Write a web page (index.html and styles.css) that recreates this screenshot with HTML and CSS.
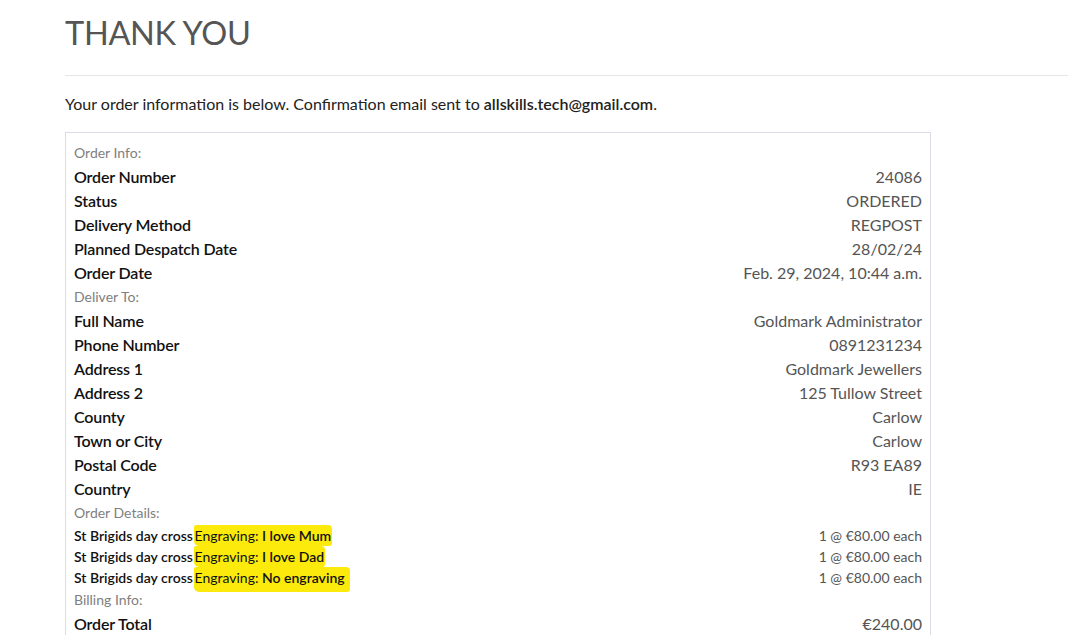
FILE: index.html
```html
<!DOCTYPE html>
<html>
<head>
<meta charset="utf-8">
<link rel="stylesheet" href="styles.css">
</head>
<body>
<div class="page">
  <h1 class="title">THANK YOU</h1>
  <hr class="rule">
  <p class="intro">Your order information is below. Confirmation email sent to <b>allskills.tech@gmail.com</b>.</p>
  <div class="box">
    <div class="section">Order Info:</div>
    <div class="row"><span class="label">Order Number</span><span class="value">24086</span></div>
    <div class="row"><span class="label">Status</span><span class="value">ORDERED</span></div>
    <div class="row"><span class="label">Delivery Method</span><span class="value">REGPOST</span></div>
    <div class="row"><span class="label">Planned Despatch Date</span><span class="value">28/02/24</span></div>
    <div class="row"><span class="label">Order Date</span><span class="value">Feb. 29, 2024, 10:44 a.m.</span></div>
    <div class="section">Deliver To:</div>
    <div class="row"><span class="label">Full Name</span><span class="value">Goldmark Administrator</span></div>
    <div class="row"><span class="label">Phone Number</span><span class="value">0891231234</span></div>
    <div class="row"><span class="label">Address 1</span><span class="value">Goldmark Jewellers</span></div>
    <div class="row"><span class="label">Address 2</span><span class="value">125 Tullow Street</span></div>
    <div class="row"><span class="label">County</span><span class="value">Carlow</span></div>
    <div class="row"><span class="label">Town or City</span><span class="value">Carlow</span></div>
    <div class="row"><span class="label">Postal Code</span><span class="value">R93 EA89</span></div>
    <div class="row"><span class="label">Country</span><span class="value">IE</span></div>
    <div class="section">Order Details:</div>
    <div class="item"><span><b>St Brigids day cross</b> <span class="hl">Engraving: <b>I love Mum</b></span></span><span class="value">1 @ €80.00 each</span></div>
    <div class="item"><span><b>St Brigids day cross</b> <span class="hl">Engraving: <b>I love Dad</b></span></span><span class="value">1 @ €80.00 each</span></div>
    <div class="item"><span><b>St Brigids day cross</b> <span class="hl hl-long">Engraving: <b>No engraving</b></span></span><span class="value">1 @ €80.00 each</span></div>
    <div class="section">Billing Info:</div>
    <div class="row"><span class="label">Order Total</span><span class="value">€240.00</span></div>
  </div>
</div>
</body>
</html>
```

FILE: styles.css
```css
html, body {
  margin: 0;
  padding: 0;
  background: #fff;
}
body {
  font-family: Lato, "Open Sans", sans-serif;
  color: #222;
}
.page {
  padding: 0 2px 0 65px;
}
.title {
  margin: 0;
  padding-top: 13px;
  font-size: 32.5px;
  font-weight: 400;
  color: #555;
  line-height: 40px;
  letter-spacing: -0.3px;
}
.rule {
  margin: 22px 0 0;
  border: 0;
  border-top: 1px solid #e6e6e6;
}
.intro {
  margin: 17px 0 0;
  font-size: 16px;
  line-height: 22px;
  color: #222;
}
.intro b {
  font-weight: 600;
}
.box {
  margin-top: 17px;
  width: 848px;
  border: 1px solid #dcdce6;
  border-bottom: none;
  padding: 8px 8px 0;
}
.section {
  font-size: 14px;
  color: #808080;
  line-height: 24px;
}
.row {
  display: flex;
  justify-content: space-between;
  font-size: 16px;
  line-height: 24px;
}
.label {
  font-weight: 600;
  color: #111;
  letter-spacing: -0.15px;
}
.value {
  color: #555;
}
.item {
  display: flex;
  justify-content: space-between;
  font-size: 14px;
  line-height: 21px;
  color: #111;
}
.item b {
  font-weight: 600;
}
.hl {
  background: #fbea0c;
  padding: 2px 1px 2px 1px;
  margin-left: -3px;
  border-radius: 2px 4px 3px 5px;
}
.hl-long {
  padding-right: 5px;
  padding-bottom: 6px;
}
```
